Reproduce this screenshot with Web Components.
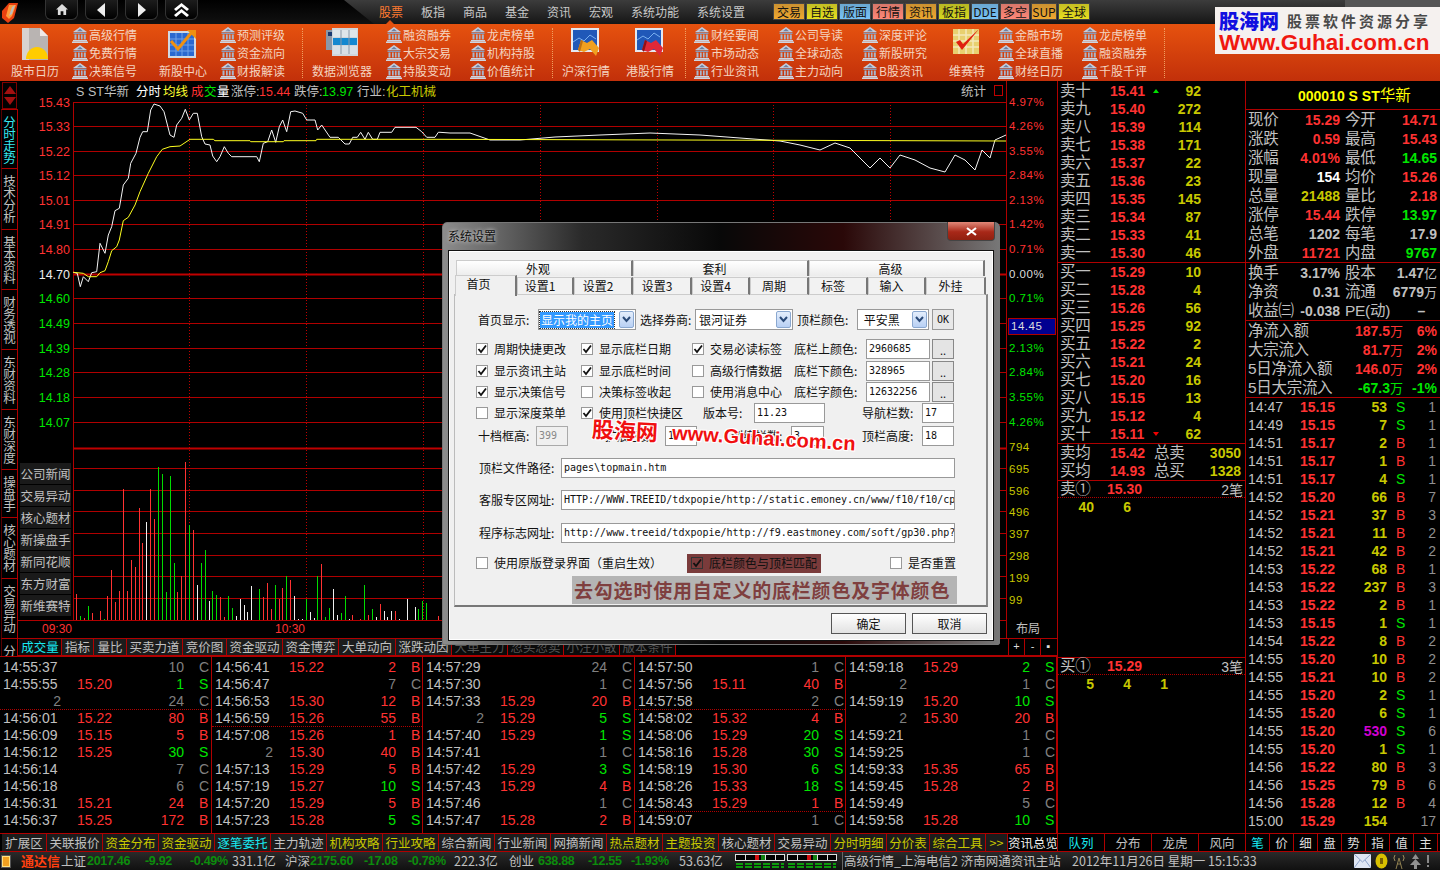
<!DOCTYPE html>
<html lang="zh">
<head>
<meta charset="utf-8">
<title>通达信</title>
<style>
  html, body { margin: 0; background: #000; overflow: hidden; }
  body { font: 14px "Liberation Sans", "Noto Sans CJK SC", sans-serif; color: #c0c0c0; }
</style>
</head>
<body>
<tdx-app>
  <tdx-topbar></tdx-topbar>
  <tdx-ribbon></tdx-ribbon>
  <tdx-sidetabs></tdx-sidetabs>
  <tdx-chart></tdx-chart>
  <tdx-book></tdx-book>
  <tdx-panel></tdx-panel>
  <tdx-ticks></tdx-ticks>
  <tdx-bottomtabs></tdx-bottomtabs>
  <tdx-status></tdx-status>
  <tdx-logo></tdx-logo>
  <tdx-dialog></tdx-dialog>
</tdx-app>

<script>
const RED = '#ff3232', GREEN = '#00e600', YEL = '#c8c800', GRAY = '#c0c0c0', LINE = '#b00000';
const CJK = '"Noto Sans CJK SC", sans-serif';
const SANS = '"Liberation Sans", "Noto Sans CJK SC", sans-serif';

function mount(host, css, html) {
  const root = host.attachShadow({ mode: 'open' });
  root.innerHTML = `<style>${css}</style>${html}`;
  return root;
}

class TdxApp extends HTMLElement {
  constructor() {
    super();
    mount(this, `
      :host { display: grid; position: relative; width: 1440px; height: 870px; overflow: hidden; background: #000;
        grid-template-columns: 18px 1039px 188px 195px; grid-template-rows: 24px 57px 575px 177px 19px 18px; }
      ::slotted(tdx-topbar), ::slotted(tdx-ribbon), ::slotted(tdx-bottomtabs), ::slotted(tdx-status) { grid-column: 1 / -1; }
      ::slotted(tdx-book), ::slotted(tdx-panel) { grid-row: 3 / 5; }
      ::slotted(tdx-ticks) { grid-column: 1 / 3; grid-row: 4; }
    `, `<slot></slot>`);
  }
}

class TdxTopbar extends HTMLElement {
  constructor() {
    super();
    const menu = ['股票', '板指', '商品', '基金', '资讯', '宏观', '系统功能', '系统设置'];
    const quick = [
      ['交易', '#f0a830', 32], ['自选', '#e8e020', 32], ['版面', '#78c4f8', 32], ['行情', '#ff8878', 32],
      ['资讯', '#f0a830', 32], ['板指', '#d8d820', 32], ['DDE', '#78c4f8', 28], ['多空', '#ff8878', 30],
      ['SUP', '#f0a830', 26], ['全球', '#e8e020', 32]
    ];
    mount(this, `
      :host { display: flex; height: 24px; background: linear-gradient(#000, #111); position: relative; overflow: hidden; }
      .logo { width: 20px; height: 22px; margin: 2px 0 0 1px; flex: none; }
      .nav { display: flex; gap: 6px; margin-left: 24px; flex: none; }
      .nav b { width: 33px; height: 20px; margin-right: 1px; box-sizing: border-box; border: 1px solid #333; border-top: 0;
        border-radius: 0 0 6px 6px; background: linear-gradient(#1c1c1c, #000); display: flex; align-items: center; justify-content: center; }
      .nav svg { display: block; }
      .right { position: absolute; left: 344px; right: 0; top: 0; height: 24px; display: flex;
        background: linear-gradient(#3c3c3c, #161616); clip-path: polygon(0 0, 100% 0, 100% 100%, 30px 100%); }
      .menu { display: flex; margin-left: 35px; flex: none; font: 12px/24px ${CJK}; color: #c8c8c8; width: 394px; }
      .menu span { margin-right: 18px; position: relative; white-space: nowrap; }
      .menu .on { color: #ff7a30; }
      .menu .on::after { content: ''; position: absolute; left: 7px; bottom: 0; border: 4px solid transparent; border-top: 0; border-bottom-color: #e05010; }
      .quick { display: flex; gap: 1px; margin-top: 3px; height: 17px; flex: none; }
      .quick span { border: 1px solid #444; box-sizing: border-box; height: 17px; font: 12px/15px ${CJK}; color: #111; text-align: center; }
      .ctl { position: absolute; right: 0; top: 0; width: 95px; height: 7px; background: #555; }
    `, `
      <svg class="logo" viewBox="0 0 20 22"><path d="M8 1h9l-4 15-6 5-6-5V9z" fill="#e84010"/><path d="M8 3h7l-4 11-3 3-3-3z" fill="#ff9a3a"/><path d="M11 5l3-2-3 9-3 2z" fill="#bbb"/></svg>
      <div class="nav">
        <b><svg width="12" height="11" viewBox="0 0 13 12"><path d="M6.5 0L13 6h-2v6H8V8H5v4H2V6H0z" fill="#ddd"/></svg></b>
        <b><svg width="9" height="14" viewBox="0 0 9 14"><path d="M8 0v14L0 7z" fill="#eee"/></svg></b>
        <b><svg width="9" height="14" viewBox="0 0 9 14"><path d="M1 0v14l8-7z" fill="#eee"/></svg></b>
        <b><svg width="15" height="14" viewBox="0 0 15 14"><path d="M7.5 0L15 6l-2 2-5.5-4.5L2 8 0 6zM7.5 6L15 12l-2 2-5.500-4.500L2 14l-2-2z" fill="#fff"/></svg></b>
      </div>
      <div class="right">
        <div class="menu">${menu.map((m, i) => `<span class="${i ? '' : 'on'}">${m}</span>`).join('')}</div>
        <div class="quick">${quick.map(q =>
          `<span style="width:${q[2]}px;background:linear-gradient(${q[1]}cc,${q[1]})">${q[0]}</span>`).join('')}</div>
        <div class="ctl"></div>
      </div>
    `);
  }
}

const BANK = `<svg width="16" height="16" viewBox="0 0 16 16"><path d="M8 0l7 5H1z" fill="#c4cede"/><path d="M8 1.800L5 4.200h6z" fill="#6e80a0"/><path d="M1.500 5.500h13V7h-13z" fill="#8a9ab8"/><path d="M2.500 7.500h2v5h-2zM6 7.500h1.700v5H6zM8.900 7.500h1.700v5H8.900zM11.800 7.500h2v5h-2z" fill="#a8b6cc"/><path d="M1 13h14v1.300H1zM0 14.500h16V16H0z" fill="#cdd5e2"/></svg>`;

const BIG_ICONS = {
  calendar: `<svg width="30" height="32" viewBox="0 0 30 32"><path d="M2 0h18l8 8v24H2z" fill="#b9b4b2"/><path d="M20 0l8 8h-8z" fill="#efeae8"/><path d="M2 0h7v32H2z" fill="#d8d2d0"/><path d="M6 31a10 11 0 0 1 22 0z" fill="#ffcc00"/></svg>`,
  chart: `<svg width="30" height="30" viewBox="0 0 30 30"><rect y="3" width="28" height="27" fill="#cfd8e4"/><rect x="2" y="5" width="24" height="23" fill="#2a68d0"/><path d="M2 11h24M2 17h24M2 23h24M8 5v23M14 5v23M20 5v23" stroke="#6ea0e8" stroke-width="1"/><path d="M3 13l7 8L24 4" fill="none" stroke="#f09010" stroke-width="3"/><path d="M19 2h9v9z" fill="#f09010"/></svg>`,
  table: `<svg width="32" height="28" viewBox="0 0 32 28"><rect x="0" y="2" width="14" height="20" fill="#8a98a8"/><rect x="2" y="4" width="10" height="4" fill="#1a3a70"/><rect x="6" y="0" width="26" height="28" fill="#cfd6dc"/><rect x="7" y="2" width="24" height="7" fill="#dfe6ea"/><rect x="7" y="10" width="24" height="7" fill="#1488d0"/><rect x="7" y="18" width="24" height="8" fill="#d8e0e6"/><path d="M15 2v24M23 2v24" stroke="#8898a8"/></svg>`,
  flagA: `<svg width="30" height="28" viewBox="0 0 30 28"><rect width="28" height="24" fill="#e4e8f0"/><rect x="2" y="2" width="24" height="20" fill="#2058b8"/><path d="M2 14l6-4 5 3 6-6 6 4" fill="none" stroke="#7ab0f0"/><path d="M7 22l3-10 6 3 5-3 7 8-3 8-6-7-6 3z" fill="#f0a020"/><path d="M7 22l3-10 2 1-3 11z" fill="#c07010"/></svg>`,
  flagB: `<svg width="30" height="28" viewBox="0 0 30 28"><rect width="28" height="24" fill="#e4e8f0"/><rect x="2" y="2" width="24" height="20" fill="#2058b8"/><path d="M2 12l6-4 5 3 6-6 6 4" fill="none" stroke="#7ab0f0"/><path d="M7 22l3-10 6 3 5-3 7 8-3 8-6-7-6 3z" fill="#e02838"/><path d="M7 22l3-10 2 1-3 11z" fill="#901018"/></svg>`,
  check: `<svg width="28" height="26" viewBox="0 0 28 26"><rect y="1" width="26" height="25" fill="#e8d070"/><path d="M0 7h26M0 13h26M0 19h26M6 1v25M13 1v25M20 1v25" stroke="#f4e8b8" stroke-width="1.500"/><path d="M3 14l6 8L26 1l-16 15-3-4z" fill="#e02010"/></svg>`
};

class TdxRibbon extends HTMLElement {
  constructor() {
    super();
    const big = (ml, w, icon, label) => `<div class="big" style="margin-left:${ml}px;width:${w}px"><div class="ico">${BIG_ICONS[icon]}</div><div>${label}</div></div>`;
    const col = (ml, w, items) => `<div class="col" style="margin-left:${ml}px;width:${w}px">${items.map(t => `<div class="it">${BANK}<span>${t}</span></div>`).join('')}</div>`;
    const sep = ml => `<i style="margin-left:${ml}px"></i>`;
    mount(this, `
      :host { display: flex; height: 57px; background: linear-gradient(#e6520f, #c2300a); font: 12px/18px ${CJK}; color: #f4d4c0; white-space: nowrap; overflow: hidden; }
      .big { flex: none; text-align: center; padding-top: 4px; box-sizing: border-box; }
      .ico { height: 34px; display: flex; justify-content: center; }
      .ico svg { display: block; }
      .col { flex: none; padding-top: 2px; box-sizing: border-box; }
      .it { display: flex; height: 18px; align-items: center; }
      .it span { margin-left: 1px; }
      i { flex: none; width: 0; border-left: 1px dotted #f0a060; height: 50px; margin-top: 4px; }
    `, [
      big(8, 54, 'calendar', '股市日历'),
      col(10, 84, ['高级行情', '免费行情', '决策信号']),
      big(0, 54, 'chart', '新股中心'),
      col(10, 82, ['预测评级', '资金流向', '财报解读']),
      sep(0),
      big(9, 60, 'table', '数据浏览器'),
      col(14, 84, ['融资融券', '大宗交易', '持股变动']),
      col(0, 82, ['龙虎榜单', '机构持股', '价值统计']),
      sep(0),
      big(7, 52, 'flagA', '沪深行情'),
      big(12, 52, 'flagB', '港股行情'),
      sep(9),
      col(8, 84, ['财经要闻', '市场动态', '行业资讯']),
      col(0, 84, ['公司导读', '全球动态', '主力动向']),
      col(0, 84, ['深度评论', '新股研究', 'B股资讯']),
      big(0, 42, 'check', '维赛特'),
      col(10, 84, ['金融市场', '全球直播', '财经日历']),
      col(0, 82, ['龙虎榜单', '融资融券', '千股千评']),
      sep(0)
    ].join(''));
  }
}

class TdxSidetabs extends HTMLElement {
  constructor() {
    super();
    const tabs = [['分时走势', 59, 1], ['技术分析', 61], ['基本资料', 60], ['财务透视', 60], ['东财资料', 60], ['东财深度', 60], ['操盘手', 48], ['核心题材', 61], ['交易异动', 60], ['分', 19]];
    mount(this, `
      :host { display: flex; flex-direction: column; height: 575px; }
      .scroll { height: 27px; box-sizing: border-box; margin: 1px 1px 0 2px; border: 1px solid #800000; display: flex; flex-direction: column; align-items: center; justify-content: center; gap: 3px; flex: none; }
      .scroll s { border: 6px solid transparent; border-top: 0; border-bottom: 8px solid #a01010; }
      .scroll s + s { border-bottom: 0; border-top: 8px solid #a01010; }
      .tab { flex: none; box-sizing: border-box; margin-left: 1px; border: 1px solid ${LINE}; border-bottom: 0; border-left-color: #500; display: flex; justify-content: center; padding-top: 6px; overflow: hidden; }
      .tab span { writing-mode: vertical-rl; text-orientation: upright; font: 12.500px/15px ${CJK}; color: ${GRAY}; letter-spacing: -0.500px; }
      .tab.on span { color: #38e8f0; }
    `, `<div class="scroll"><s></s><s></s></div>` + tabs.map(t =>
      `<div class="tab ${t[2] ? 'on' : ''}" style="height:${t[1]}px"><span>${t[0]}</span></div>`).join(''));
  }
}

class TdxChart extends HTMLElement {
  constructor() {
    super();
    const left = [[102, '15.43', RED], [126, '15.33', RED], [151, '15.22', RED], [175, '15.12', RED], [200, '15.01', RED], [224, '14.91', RED], [249, '14.80', RED],
      [274, '14.70', '#eee'], [298, '14.60', GREEN], [323, '14.49', GREEN], [348, '14.39', GREEN], [372, '14.28', GREEN], [397, '14.18', GREEN], [422, '14.07', GREEN]];
    const right = [[102, '4.97%', RED], [126, '4.26%', RED], [151, '3.55%', RED], [175, '2.84%', RED], [200, '2.13%', RED], [224, '1.42%', RED], [249, '0.71%', RED],
      [274, '0.00%', '#ddd'], [298, '0.71%', GREEN], [348, '2.13%', GREEN], [372, '2.84%', GREEN], [397, '3.55%', GREEN], [422, '4.26%', GREEN],
      [447, '794', YEL], [469, '695', YEL], [491, '596', YEL], [512, '496', YEL], [534, '397', YEL], [556, '298', YEL], [578, '199', YEL], [600, '99', YEL]];
    const hLines = [102, 126, 151, 175, 200, 224, 249, 298, 323, 348, 372, 397, 422, 468, 490, 511, 533, 555, 576, 598];
    const vLines = [189, 306, 423, 540, 657, 773, 890];

    const zoomed = a => a.map(p => `${(p[0] / 3).toFixed(1)},${(p[1] / 3 + 80).toFixed(1)}`).join(' ');
    const white = zoomed([[220,577],[232,580],[241,620],[250,590],[265,605],[275,578],[290,575],[300,490],[315,520],[325,465],[335,440],[345,392],[358,385],[370,315],[385,295],[392,250],[408,220],[420,172],[428,155],[442,155],[452,90],[462,72],[480,78],[492,95],[510,165],[522,172],[530,135],[545,115],[556,88],[568,120],[580,100],[592,100],[605,170],[615,192],[630,195],[638,228],[650,245],[660,230],[673,200],[685,220],[695,230],[770,230],[778,245],[790,190],[803,185],[815,150],[827,187],[838,140],[848,120],[860,155],[872,95],[885,93],[908,100],[920,120],[945,120],[953,150],[965,135],[990,172],[1015,172],[1035,192],[1048,192],[1058,172],[1072,172],[1082,157],[1095,178],[1105,157],[1118,178],[1132,178],[1140,157],[1175,157],[1185,142],[1248,142],[1265,155],[1280,172],[1305,172],[1315,157],[1320,157]])
      + ' 450,133 470,133 490,140 520,140 555,137 600,135 650,133 700,135 740,138 780,141 800,145 820,150 835,143 850,148 860,158 870,168 880,158 890,168 900,155 915,160 930,168 945,172 955,155 965,160 975,170 982,150 990,158 995,140 1006,135';
    const avg = zoomed([[220,577],[250,580],[265,590],[290,590],[300,578],[315,572],[325,545],[335,512],[350,500],[358,480],[370,422],[385,412],[405,375],[420,335],[445,280],[470,230],[487,208],[510,200],[540,198],[570,178],[640,178],[645,182],[750,182],[752,185],[850,185],[852,182],[948,182],[950,178],[1320,178]])
      + ' 1006,141';

    const R = RED, G = '#00dc00', W = '#eee';
    const bars = [[229,642,R],[241,708,G],[253,714,R],[265,678,G],[277,699,R],[301,693,R],[313,717,G],[322,648,R],[334,570,R],[346,666,R],[358,633,R],[370,327,R],[382,633,R],[394,540,R],[406,561,R],[418,384,R],[427,489,R],[439,426,W],[451,327,R],[463,417,R],[475,261,G],[487,282,G],[499,636,G],[511,288,G],[523,549,G],[532,636,R],[544,588,R],[556,246,R],[568,435,G],[580,450,R],[592,615,W],[604,549,G],[616,510,G],[628,663,W],[637,633,G],[649,645,G],[661,651,R],[673,711,R],[685,648,G],[697,684,G],[709,708,W],[721,657,W],[733,675,W],[742,696,W],[754,618,W],[778,627,G],[790,651,R],[802,609,R],[814,687,R],[826,615,G],[838,657,R],[847,624,R],[859,588,G],[871,600,R],[883,648,W],[895,717,W],[907,717,W],[919,657,G],[931,696,W],[943,714,W],[952,588,G],[964,552,R],[976,711,G],[988,684,G],[1000,627,W],[1012,705,W],[1024,699,G],[1036,648,G],[1048,717,W],[1057,705,R],[1081,717,R],[1093,615,G],[1105,705,R],[1117,687,G],[1129,711,W],[1141,672,R],[1153,693,W],[1162,711,W],[1174,693,W],[1186,693,R],[1198,717,W],[1222,657,W],[1246,681,W],[1255,687,G],[1267,663,G],[1279,669,G],[1315,708,R]];
    const news = ['公司新闻', '交易异动', '核心题材', '新操盘手', '新同花顺', '东方财富', '新维赛特'];
    const tabs = [['成交量', 41, 1], ['指标', 30], ['量比', 31], ['买卖力道', 54], ['竞价图', 42], ['资金驱动', 54], ['资金博弈', 54], ['大单动向', 55], ['涨跌动因', 54], ['大单主力', 54, 2], ['忽买忽卖', 54, 2], ['小注小散', 54, 2], ['版本条件', 54, 2]];
    const infoRow = [[76, 'S', GRAY], [88, 'ST华新', GRAY], [136, '分时', '#fff'], [163, '均线', '#ffff30'], [191, '成', RED], [204, '交', GREEN], [217, '量', '#fff'], [231, '涨停:', GRAY], [259, '15.44', RED], [294, '跌停:', GRAY], [322, '13.97', GREEN], [357, '行业:', GRAY], [386, '化工机械', YEL], [961, '统计', GRAY]];

    mount(this, `
      :host { display: block; position: relative; height: 575px; }
      svg { display: block; }
      svg text { font-family: ${SANS}; }
      .news { position: absolute; left: 2px; top: 382px; display: flex; flex-direction: column; gap: 1px; }
      .news span { width: 51px; height: 21px; background: #1a1a1a; font: 12.500px/21px ${CJK}; color: ${GRAY}; text-align: center; white-space: nowrap; }
      .tabs { display: flex; height: 18px; box-sizing: border-box; padding-left: 1px; border-bottom: 1px solid ${LINE}; border-top: 1px solid ${LINE}; }
      .tabs span { flex: none; box-sizing: border-box; border-right: 1px solid ${LINE}; background: #1c1c1c; font: 12.500px/16px ${CJK}; text-align: center; color: ${GRAY}; white-space: nowrap; }
      .tabs .on { color: #18e8f0; background: #0c0c0c; }
      .tabs .dim { color: #555; background: #0a0a0a; }
      .mini { position: absolute; top: 557px; right: 1px; display: flex; height: 18px; z-index: 1; background: #000; }
      .mini span { width: 16px; border: 1px solid ${LINE}; border-width: 1px 0 1px 1px; font: 11px/14px "Liberation Sans"; text-align: center; color: #ddd; box-sizing: border-box; }
      .cross { position: absolute; left: 990px; top: 237px; width: 48px; height: 17px; box-sizing: border-box; border: 1px solid ${LINE}; background: #000090; color: #ddd; font: 11.500px/15px "Liberation Sans"; padding-left: 2px; letter-spacing: .5px; }
    `, `
      <svg width="1039" height="557" viewBox="18 81 1039 557">
        ${hLines.map(y => `<path d="M73 ${y + .5}H1006" stroke="${LINE}"/>`).join('')}
        <path d="M73 274.500H1006M73 448.500H1006" stroke="#c00000" stroke-width="2"/>
        ${vLines.map(x => `<path d="M${x + .5} 102V620" stroke="#c00000" stroke-dasharray="1 2"/>`).join('')}
        <path d="M73.500 102V620M1006.500 81V638M18 620.500H1006" stroke="${LINE}"/>
        ${bars.map(b => `<path d="M${Math.round(b[0] / 3) + .5} ${(b[1] / 3 + 380).toFixed(1)}V620" stroke="${b[2]}"/>`).join('')}
        <polyline points="${white}" fill="none" stroke="#f4f4f4"/>
        <polyline points="${avg}" fill="none" stroke="#ffff20"/>
        ${left.map(l => `<text x="70" y="${l[0] + 5}" text-anchor="end" font-size="12.500" fill="${l[2]}">${l[1]}</text>`).join('')}
        ${right.map(l => `<text x="1009" y="${l[0] + 4}" font-size="11.500" letter-spacing=".5" fill="${l[2]}">${l[1]}</text>`).join('')}
        ${infoRow.map(t => `<text x="${t[0]}" y="96" font-size="12.500" fill="${t[2]}">${t[1]}</text>`).join('')}
        <rect x="994.500" y="85.500" width="8" height="10" fill="none" stroke="#c00000"/>
        <text x="72" y="633" text-anchor="end" font-size="12" fill="${RED}">09:30</text>
        <text x="305" y="633" text-anchor="end" font-size="12" fill="${RED}">10:30</text>
        <text x="1016" y="633" font-size="12" fill="${GRAY}">布局</text>
      </svg>
      <div class="news">${news.map(n => `<span>${n}</span>`).join('')}</div>
      <div class="cross">14.45</div>
      <div class="tabs">${tabs.map(t => `<span class="${t[2] === 1 ? 'on' : t[2] === 2 ? 'dim' : ''}" style="width:${t[1] + 2}px">${t[0]}</span>`).join('')}</div>
      <div class="mini"><span>+</span><span>-</span><span>▪</span></div>
    `);
  }
}

class TdxBook extends HTMLElement {
  constructor() {
    super();
    const sells = [['卖十', '15.41', 92, 'up'], ['卖九', '15.40', 272], ['卖八', '15.39', 114], ['卖七', '15.38', 171], ['卖六', '15.37', 22], ['卖五', '15.36', 23], ['卖四', '15.35', 145], ['卖三', '15.34', 87], ['卖二', '15.33', 41], ['卖一', '15.30', 46]];
    const buys = [['买一', '15.29', 10], ['买二', '15.28', 4], ['买三', '15.26', 56], ['买四', '15.25', 92], ['买五', '15.22', 2], ['买六', '15.21', 24], ['买七', '15.20', 16], ['买八', '15.15', 13], ['买九', '15.12', 4], ['买十', '15.11', 62, 'down']];
    const row = r => `<div class="row"><span class="l">${r[0]}</span><b class="p">${r[1]}${r[3] ? `<i class="${r[3]}"></i>` : ''}</b><b class="q">${r[2]}</b></div>`;
    const avg = (a, p, b, v) => `<div class="row avg"><span class="l">${a}</span><b class="p">${p}</b><span class="s">${b}</span><b class="q">${v}</b></div>`;
    const queue = (a, p, n, q) => `
      <div class="row qh"><span class="l">${a}</span><b class="p">${p}</b><span class="n">${n}</span></div>
      <div class="row qv">${q.map(v => `<b>${v}</b>`).join('')}</div>`;
    mount(this, `
      :host { display: flex; flex-direction: column; box-sizing: border-box; height: 752px; border-left: 1px solid ${LINE}; white-space: nowrap; }
      .sec { border-bottom: 1px solid ${LINE}; box-sizing: border-box; flex: none; }
      .sec.top { padding-top: 1px; }
      .row { display: flex; height: 18px; align-items: center; padding-left: 2px; }
      .l { width: 50px; font: 15.500px/18px ${SANS}; color: ${GRAY}; flex: none; letter-spacing: -.3px; }
      .p { width: 50px; color: ${RED}; flex: none; position: relative; }
      .q { width: 41px; text-align: right; color: ${YEL}; flex: none; }
      i { position: absolute; left: 43px; top: 6px; border: 3px solid transparent; }
      i.up { border-top: 0; border-bottom: 4px solid #00e000; }
      i.down { border-bottom: 0; border-top: 4px solid #f00000; }
      .s { width: 44px; font: 15.500px/18px ${SANS}; color: ${GRAY}; flex: none; letter-spacing: -.3px; }
      .avg .p { width: 44px; }
      .avg .q { width: 43px; }
      .qh .l { width: 47px; }
      .qh .n { margin-left: auto; margin-right: 2px; color: ${GRAY}; font-size: 14px; }
      .qh { box-sizing: border-box; height: 17px; border-bottom: 1px dotted ${LINE}; }
      .qv { padding-left: 1px; height: 17px; }
      .qv b { color: ${YEL}; width: 37px; text-align: right; flex: none; }
      .qv b:first-child { width: 35px; }
    `, `
      <div class="sec top" style="height:182px">${sells.map(row).join('')}</div>
      <div class="sec" style="height:181px">${buys.map(row).join('')}</div>
      <div class="sec" style="height:37px">${avg('卖均', '15.42', '总卖', 3050)}${avg('买均', '14.93', '总买', 1328)}</div>
      <div class="sec" style="height:177px">${queue('卖①', '15.30', '2笔', [40, 6])}</div>
      <div>${queue('买①', '15.29', '3笔', [5, 4, 1])}</div>
    `);
  }
}

class TdxPanel extends HTMLElement {
  constructor() {
    super();
    const r2 = (a, v, c, b, w, d) => `<div class="row"><span class="l">${a}</span><b class="v" style="color:${c}">${v}</b><span class="l2">${b}</span><b class="v2" style="color:${d}">${w}</b></div>`;
    const flow = (a, v, p, c) => `<div class="row"><span class="l" style="width:100px">${a}</span><b class="f" style="color:${c}">${v}<em>万</em></b><b class="pct" style="color:${c}">${p}</b></div>`;
    const ticks = `14:47,15.15,53,S,1|14:49,15.15,7,S,1|14:51,15.17,2,B,1|14:51,15.17,1,B,1|14:51,15.17,4,S,1|14:52,15.20,66,B,7|14:52,15.21,37,B,3|14:52,15.21,11,B,2|14:52,15.21,42,B,2|14:53,15.22,68,B,1|14:53,15.22,237,B,3|14:53,15.22,2,B,1|14:53,15.15,1,S,1|14:54,15.22,8,B,2|14:55,15.20,10,B,2|14:55,15.21,10,B,2|14:55,15.20,2,S,1|14:55,15.20,6,S,1|14:55,15.20,530,S,6|14:55,15.20,1,S,1|14:56,15.22,80,B,3|14:56,15.25,79,B,6|14:56,15.28,12,B,4|15:00,15.29,154,,17`.split('|').map(s => s.split(','));
    mount(this, `
      :host { display: flex; flex-direction: column; height: 752px; box-sizing: border-box; border-left: 1px solid ${LINE}; white-space: nowrap; }
      .head { height: 29px; box-sizing: border-box; border-bottom: 1px solid ${LINE}; padding: 6px 0 0 52px; font-weight: bold; font-size: 14px; line-height: 18px; color: #ffff00; flex: none; }
      .head span { font-weight: normal; font-size: 15.500px; }
      .sec { border-bottom: 1px solid ${LINE}; flex: none; box-sizing: border-box; }
      .row { display: flex; height: 19px; align-items: center; padding-left: 2px; }
      .l, .l2 { font: 15.500px/19px ${SANS}; color: ${GRAY}; flex: none; letter-spacing: -.3px; }
      .l { width: 45px; }
      .v { width: 47px; text-align: right; flex: none; }
      .l2 { margin-left: 5px; width: 40px; }
      .v2 { width: 52px; text-align: right; flex: none; }
      .f { width: 55px; text-align: right; flex: none; }
      .pct { width: 34px; text-align: right; flex: none; }
      em { font: 13px ${SANS}; }
      .tk { display: grid; grid-template-columns: 52px 50px 37px 20px 29px; height: 18px; line-height: 18px; padding-left: 2px; }
      .ti { color: ${GRAY}; }
      .pr { color: ${RED}; font-weight: bold; }
      .qt { text-align: right; color: ${YEL}; font-weight: bold; }
      .fl { padding-left: 9px; }
      .ct { text-align: right; color: #909090; }
    `, `
      <div class="head">000010 S  ST<span>华新</span></div>
      <div class="sec" style="height:153px">
        ${r2('现价', '15.29', RED, '今开', '14.71', RED)}
        ${r2('涨跌', '0.59', RED, '最高', '15.43', RED)}
        ${r2('涨幅', '4.01%', RED, '最低', '14.65', GREEN)}
        ${r2('现量', '154', '#fff', '均价', '15.26', RED)}
        ${r2('总量', '21488', YEL, '量比', '2.18', RED)}
        ${r2('涨停', '15.44', RED, '跌停', '13.97', GREEN)}
        ${r2('总笔', '1202', GRAY, '每笔', '17.9', GRAY)}
        ${r2('外盘', '11721', RED, '内盘', '9767', GREEN)}
      </div>
      <div class="sec" style="height:58px">
        ${r2('换手', '3.17%', GRAY, '股本', '1.47<em>亿</em>', GRAY)}
        ${r2('净资', '0.31', GRAY, '流通', '6779<em>万</em>', GRAY)}
        ${r2('收益㈢', '-0.038', GRAY, 'PE(动)', '–&nbsp;&nbsp;&nbsp;', GRAY)}
      </div>
      <div class="sec" style="height:77px">
        ${flow('净流入额', '187.5', '6%', RED)}
        ${flow('大宗流入', '81.7', '2%', RED)}
        ${flow('5日净流入额', '146.0', '2%', RED)}
        ${flow('5日大宗流入', '-67.3', '-1%', GREEN)}
      </div>
      <div>${ticks.map(t => `<div class="tk"><span class="ti">${t[0]}</span><span class="pr">${t[1]}</span><span class="qt" style="${t[2] === '530' ? 'color:#d000d0' : ''}">${t[2]}</span><span class="fl" style="color:${t[3] === 'B' ? RED : GREEN}">${t[3]}</span><span class="ct">${t[4]}</span></div>`).join('')}</div>
    `);
  }
}

class TdxTicks extends HTMLElement {
  constructor() {
    super();
    const cols = [
      [212, ['14:55:37,,10,C', '14:55:55,15.20,1,S', '.2,,24,C', '14:56:01,15.22,80,B', '14:56:09,15.15,5,B', '14:56:12,15.25,30,S', '14:56:14,,7,C', '14:56:18,,6,C', '14:56:31,15.21,24,B', '14:56:37,15.25,172,B']],
      [211, ['14:56:41,15.22,2,B', '14:56:47,,7,C', '14:56:53,15.30,12,B', '.14:56:59,15.26,55,B', '14:57:08,15.26,1,B', '2,15.30,40,B', '14:57:13,15.29,5,B', '14:57:19,15.27,10,S', '14:57:20,15.29,5,B', '14:57:23,15.28,5,S']],
      [212, ['14:57:29,,24,C', '14:57:30,,1,C', '14:57:33,15.29,20,B', '2,15.29,5,S', '14:57:40,15.29,1,S', '14:57:41,,1,C', '14:57:42,15.29,3,S', '14:57:43,15.29,4,B', '14:57:46,,1,C', '14:57:47,15.28,2,B']],
      [211, ['14:57:50,,1,C', '14:57:56,15.11,40,B', '.14:57:58,,2,C', '14:58:02,15.32,4,B', '14:58:06,15.29,20,S', '14:58:16,15.28,30,S', '14:58:19,15.30,6,S', '14:58:26,15.33,18,S', '.14:58:43,15.29,1,B', '14:59:07,,1,C']],
      [211, ['14:59:18,15.29,2,S', '2,,1,C', '14:59:19,15.20,10,S', '2,15.30,20,B', '14:59:21,,1,C', '14:59:25,,1,C', '14:59:33,15.35,65,B', '14:59:45,15.28,2,B', '14:59:49,,5,C', '14:59:58,15.28,10,S']]
    ];
    const color = { B: RED, S: GREEN, C: '#808080' };
    const row = s => {
      const dot = s[0] === '.';
      const p = (dot ? s.slice(1) : s).split(',');
      const bare = p[0].length < 3;
      return `<div class="row ${dot ? 'dot' : ''}"><span class="t ${bare ? 'bare' : ''}">${p[0]}</span><span class="p">${p[1]}</span><span class="q" style="color:${color[p[3]]}">${p[2]}</span><span class="f" style="color:${color[p[3]]}">${p[3]}</span></div>`;
    };
    mount(this, `
      :host { display: flex; height: 177px; box-sizing: border-box; border-top: 1px solid ${LINE}; padding-top: 2px; }
      .col { flex: none; box-sizing: border-box; border-right: 1px solid ${LINE}; margin-top: -2px; padding-top: 2px; height: 176px; }
      .row { display: grid; grid-template-columns: 58px 16px 50px 57px 25px; height: 17px; padding-left: 3px; line-height: 17px; box-sizing: border-box; white-space: nowrap; }
      .dot { border-bottom: 1px dotted ${LINE}; }
      .t { color: ${GRAY}; grid-column: 1; }
      .t.bare { text-align: right; color: #808080; }
      .p { color: ${RED}; grid-column: 3; }
      .q { text-align: right; grid-column: 4; }
      .f { grid-column: 5; padding-left: 15px; }
    `, cols.map(c => `<div class="col" style="width:${c[0]}px">${c[1].map(row).join('')}</div>`).join(''));
  }
}

class TdxBottomtabs extends HTMLElement {
  constructor() {
    super();
    const Y = YEL, C = '#18e8f0';
    const tabs = [['扩展区', 45], ['关联报价', 56], ['资金分布', 56, Y], ['资金驱动', 56, Y], ['逐笔委托', 56, C], ['主力轨迹', 56], ['机构攻略', 56, Y], ['行业攻略', 56, Y], ['综合新闻', 56], ['行业新闻', 56], ['网摘新闻', 56], ['热点题材', 56, Y], ['主题投资', 56, Y], ['核心题材', 56], ['交易异动', 56], ['分时明细', 56, Y], ['分价表', 43, Y], ['综合工具', 56, Y], ['>>', 22, Y], ['资讯总览', 50, '#eee', '#000'],
      ['队列', 47, C, '#000'], ['分布', 47, GRAY, '#000'], ['龙虎', 47, GRAY, '#000'], ['风向', 47, GRAY, '#000'], ['笔', 24, C, '#000'], ['价', 24, '#ddd', '#000'], ['细', 24, '#ddd', '#000'], ['盘', 24, '#ddd', '#000'], ['势', 24, '#ddd', '#000'], ['指', 24, '#ddd', '#000'], ['值', 24, '#ddd', '#000'], ['主', 24, '#ddd', '#000']];
    mount(this, `
      :host { display: flex; height: 19px; box-sizing: border-box; border-top: 1px solid ${LINE}; border-bottom: 1px solid ${LINE}; padding-left: 2px; overflow: hidden; }
      span { flex: none; box-sizing: border-box; border-right: 1px solid ${LINE}; background: #1c1c1c; text-align: center; font: 12.500px/17px ${CJK}; white-space: nowrap; overflow: hidden; }
    `, tabs.map(t => `<span style="width:${t[1]}px;color:${t[2] || GRAY};${t[3] ? `background:${t[3]}` : ''}">${t[0]}</span>`).join(''));
  }
}

class TdxStatus extends HTMLElement {
  constructor() {
    super();
    const G = '#0c8c0c';
    const seg = (ml, w, t, c, s) => `<span class="${s ? 'cjk' : ''}" style="margin-left:${ml}px;width:${w}px;color:${c}">${t}</span>`;
    const meter = `<svg width="50" height="16" viewBox="0 0 50 16"><rect x=".5" y="1.500" width="49" height="6" fill="#000" stroke="#ddd"/><path d="M10.500 1V8M20.500 1V8M30.500 1V8M40.500 1V8" stroke="#ddd"/><rect x="20" y="2" width="4" height="5" fill="#d01010"/><rect x="26" y="2" width="4" height="5" fill="#108010"/><path d="M1 11h48M1 14h48" stroke="#0c9c0c" stroke-width="2" stroke-dasharray="7 2"/></svg>`;
    mount(this, `
      :host { display: flex; height: 18px; align-items: center; background: linear-gradient(#2a2a2a, #101010); white-space: nowrap; overflow: hidden; font-size: 12.500px; font-weight: bold; letter-spacing: -.3px; }
      span { flex: none; }
      .logo { width: 8px; height: 11px; margin-left: 2px; box-sizing: border-box; background: #f0a020; border: 1px solid #ffe080; outline: 1px solid #555; flex: none; }
      .brand { margin-left: 11px; font: bold 13px/18px ${CJK}; color: #ff4010; width: 40px; letter-spacing: 0; }
      .cjk { font: 12.500px/18px ${CJK}; color: ${GRAY}; letter-spacing: 0; }
      .meters { display: flex; gap: 2px; margin-left: 10px; flex: none; }
      .meters svg { display: block; }
      .ic { display: flex; gap: 4px; align-items: center; margin-left: 0; flex: none; }
      .sep { width: 1px; height: 18px; background: #666; flex: none; margin-left: 5px; }
      .ic svg { display: block; }
    `, `
      <i class="logo"></i><span class="brand">通达信</span>
      ${seg(0, 26, '上证', GRAY, 1)}${seg(0, 58, '2017.46', G)}${seg(0, 45, '-9.92', G)}${seg(0, 42, '-0.49%', G)}
      ${seg(0, 53, '331.1亿', GRAY, 1)}${seg(0, 25, '沪深', GRAY, 1)}${seg(0, 54, '2175.60', G)}${seg(0, 44, '-17.08', G)}${seg(0, 46, '-0.78%', G)}
      ${seg(0, 55, '222.3亿', GRAY, 1)}${seg(0, 29, '创业', GRAY, 1)}${seg(0, 50, '638.88', G)}${seg(0, 43, '-12.55', G)}${seg(0, 48, '-1.93%', G)}
      ${seg(0, 46, '53.63亿', GRAY, 1)}
      <div class="meters">${meter}${meter}</div>
      <i class="sep"></i>
      ${seg(1, 228, '高级行情_上海电信2  济南网通资讯主站', GRAY, 1)}
      ${seg(0, 282, '2012年11月26日 星期一  15:15:33', GRAY, 1)}
      <div class="ic">
        <svg width="17" height="14" viewBox="0 0 17 14"><rect width="17" height="14" fill="#dfe6f4"/><path d="M0 0l8.500 8L17 0M0 14l6-8M17 14l-6-8" fill="none" stroke="#8aa0c8"/></svg>
        <svg width="13" height="16" viewBox="0 0 13 16"><ellipse cx="6.500" cy="8" rx="6" ry="7.500" fill="#d8c000"/><path d="M5 5h3v6H5z" fill="#786000"/></svg>
        <svg width="14" height="16" viewBox="0 0 14 16"><path d="M7 5L4 16M7 5l3 11M5 11h4" stroke="#908050" fill="none"/><path d="M3 2a5 5 0 0 0 0 6M11 2a5 5 0 0 1 0 6" stroke="#a09060" fill="none"/></svg>
        <svg width="11" height="15" viewBox="0 0 11 15"><path d="M5.500 0L9 5H2zM5.500 5L11 11H0z" fill="#909090"/><rect x="4" y="11" width="3" height="4" fill="#909090"/></svg>
        <svg width="6" height="14" viewBox="0 0 6 14"><path d="M2 1h2v8H2zM2 11h2v2H2z" fill="#888"/></svg>
      </div>
    `);
  }
}

class TdxLogo extends HTMLElement {
  constructor() {
    super();
    mount(this, `
      :host { position: absolute; left: 1215px; top: 7px; width: 225px; height: 47px; box-sizing: border-box; padding: 3px 0 0 4px; background: #f5f1ef; white-space: nowrap; }
      .a { display: flex; align-items: center; height: 22px; }
      .a b { font: 900 20px/22px ${CJK}; color: #1010e0; width: 68px; flex: none; }
      .a span { font: bold 15px/22px ${CJK}; color: #4a4a4a; letter-spacing: 3px; }
      .b { font: bold 22.500px/22px "Liberation Sans", sans-serif; color: #f01810; }
    `, `<div class="a"><b>股海网</b><span>股票软件资源分享</span></div><div class="b">Www.Guhai.com.cn</div>`);
  }
}

class TdxCheck extends HTMLElement {
  constructor() {
    super();
    mount(this, `
      :host { display: flex; align-items: center; flex: none; white-space: nowrap; }
      .box { width: 12px; height: 12px; box-sizing: border-box; background: var(--box, #fff); border: 1px solid var(--box-line, #999); margin-right: 6px; flex: none; display: block; }
      svg { display: block; visibility: hidden; }
      :host([checked]) svg { visibility: visible; }
    `, `<span class="box"><svg width="10" height="10" viewBox="0 0 10 10"><path d="M1.500 5l2.500 3L9 1.500" fill="none" stroke="#111" stroke-width="1.800"/></svg></span><slot></slot>`);
  }
}

class TdxCombo extends HTMLElement {
  constructor() {
    super();
    mount(this, `
      :host { display: flex; align-items: center; flex: none; height: 21px; box-sizing: border-box; border: 1px solid #999; background: #fff; padding: 1px; }
      .t { flex: 1; padding-left: 2px; white-space: nowrap; overflow: hidden; }
      :host([selected]) .t { flex: none; padding: 0 1px; background: #3399ff; color: #fff; outline: 1px dotted #333; line-height: 16px; margin-right: auto; }
      .d { width: 15px; height: 17px; margin-left: auto; box-sizing: border-box; border: 1px solid #8aa8d0; border-radius: 2px; background: linear-gradient(#e4eefc, #b8d0f4); display: flex; align-items: center; justify-content: center; flex: none; }
      svg { display: block; }
    `, `<span class="t"><slot></slot></span><span class="d"><svg width="9" height="7" viewBox="0 0 9 7"><path d="M1 1l3.500 4L8 1" fill="none" stroke="#2a4a78" stroke-width="2"/></svg></span>`);
  }
}

class TdxField extends HTMLElement {
  constructor() {
    super();
    mount(this, `
      :host { display: block; flex: none; height: 20px; box-sizing: border-box; border: 1px solid #999; background: #fff; font: 10px/18px "DejaVu Sans Mono", monospace; color: #111; padding-left: 2px; white-space: nowrap; overflow: hidden; }
      :host([disabled]) { background: #f0f0f0; color: #888; border-color: #aaa; }
    `, `<slot></slot>`);
  }
}

class TdxDialog extends HTMLElement {
  constructor() {
    super();
    const s = (w, m) => `style="width:${w}px;margin-left:${m || 0}px"`;
    const lb = (t, w, m) => `<span class="lb" ${s(w, m)}>${t}</span>`;
    const ck = (t, w, on, m) => `<tdx-check ${on ? 'checked' : ''} ${s(w, m)}>${t}</tdx-check>`;
    const fd = (t, w, m, extra) => `<tdx-field ${extra || ''} ${s(w, m)}>${t}</tdx-field>`;
    const btn = (w, m) => `<span class="dots" ${s(w, m)}>..</span>`;
    const path = (t, v, top) => `<div class="r" style="margin-top:${top}px">${lb(t, 78, 24)}${fd(v, 394, 4)}</div>`;
    mount(this, `
      :host { position: absolute; left: 442px; top: 222px; width: 558px; height: 423px; box-sizing: border-box; border: 1px solid #777; border-radius: 5px 5px 2px 2px;
        background: linear-gradient(90deg, #8c8c8c, #2a2a2a 25%, #080808 50%, #2a0808 72%, #777); font: 12px/20px ${CJK}; color: #111; white-space: nowrap; display: flex; flex-direction: column; z-index: 2; }
      .title { height: 27px; display: flex; flex: none; position: relative; }
      .title span { margin: 3px 0 0 5px; font-size: 12px; color: #111; text-shadow: 0 0 4px #eee; line-height: 20px; }
      .close { position: absolute; right: 4px; top: -1px; width: 48px; height: 19px; background: linear-gradient(#e08878, #a82818 55%, #902010); border: 1px solid #444; border-top: 0; border-radius: 0 0 4px 4px; box-sizing: border-box; display: flex; align-items: center; justify-content: center; }
      .client { margin: 0 5px; background: #f0f0f0; border: 1px solid #111; box-shadow: inset 0 0 0 1px #fff; height: 391px; box-sizing: border-box; flex: none; padding-top: 9px; overflow: hidden; }
      .tabs1, .tabs2 { display: flex; margin-left: 7px; }
      .tabs1 span { height: 16px; box-sizing: border-box; background: linear-gradient(#fff, #ececec); border: 1px solid #ccc; border-right: 2px solid #777; border-bottom: 0; padding-right: 12px; text-align: center; line-height: 15px; flex: none; }
      .tabs2 { height: 19px; margin-left: 6px; }
      .tabs2 span { margin-top: 1px; height: 18px; box-sizing: border-box; border: 1px solid #ccc; border-right: 2px solid #777; padding-right: 10px; text-align: center; line-height: 15px; background: #f2f2f2; flex: none; }
      .tabs2 .sel { margin-top: -1px; height: 21px; border-bottom: 0; background: #f0f0f0; position: relative; z-index: 1; padding-right: 14px; }
      .panel { margin-left: 5px; width: 534px; height: 313px; box-sizing: border-box; border: 1px solid #bbb; border-right: 2px solid #888; border-bottom: 2px solid #777; margin-top: -1px; }
      .r { display: flex; align-items: center; height: 21px; }
      .lb { flex: none; }
      .dots { flex: none; height: 20px; box-sizing: border-box; border: 1px solid #888; background: #e4e4e4; text-align: center; font-size: 11px; line-height: 20px; }
      .ok { flex: none; height: 21px; box-sizing: border-box; border: 1px solid #999; background: #e8e8e8; text-align: center; font: 10px/19px "DejaVu Sans Mono", monospace; }
      .hl { display: flex; align-items: center; flex: none; height: 19px; background: #7a3b3b; padding-left: 4px; box-sizing: border-box; --box: #7a3b3b; --box-line: #333; }
      .hint { margin: 3px 0 0 117px; width: 385px; height: 28px; padding-left: 2px; box-sizing: border-box; background: #b4b4b4; font: bold 19px/28px ${CJK}; color: #7f3f3f; letter-spacing: .8px; overflow: hidden; }
      .act { display: flex; margin: 6px 0 0 382px; gap: 6px; }
      .act span { width: 75px; height: 21px; box-sizing: border-box; border: 1px solid #555; background: linear-gradient(#fff, #e2e2e2); text-align: center; line-height: 19px; flex: none; }
      .wm { position: absolute; color: #f01010; font-weight: bold; text-shadow: 1px 1px 0 #fff, -1px -1px 0 #fff, 1px -1px 0 #fff, -1px 1px 0 #fff; pointer-events: none; z-index: 3; }
      .wm1 { left: 149px; top: 192px; font: bold 22px/28px ${CJK}; transform: rotate(3deg); }
      .wm2 { left: 229px; top: 203px; font: bold 20px/24px "Liberation Sans", sans-serif; transform: rotate(3.500deg); }
    `, `
      <div class="title"><span>系统设置</span><div class="close"><svg width="11" height="9" viewBox="0 0 11 9"><path d="M1 1l9 7M10 1L1 8" stroke="#fff" stroke-width="2.200"/></svg></div></div>
      <div class="client">
        <div class="tabs1"><span style="width:177px">外观</span><span style="width:176px">套利</span><span style="width:176px">高级</span></div>
        <div class="tabs2">
          <span class="sel" style="width:62px">首页</span><span style="width:57px">设置1</span><span style="width:59px">设置2</span><span style="width:59px">设置3</span><span style="width:58px">设置4</span><span style="width:59px">周期</span><span style="width:59px">标签</span><span style="width:58px">输入</span><span style="width:60px">外挂</span>
        </div>
        <div class="panel">
          <div class="r" style="margin-top:14px">
            ${lb('首页显示:', 60, 23)}<tdx-combo selected ${s(98)}>显示我的主页</tdx-combo>
            ${lb('选择券商:', 53, 4)}<tdx-combo ${s(98, 2)}>银河证券</tdx-combo>
            ${lb('顶栏颜色:', 54, 4)}<tdx-combo ${s(72, 6)}>&nbsp;平安黑</tdx-combo><span class="ok" ${s(22, 3)}>OK</span>
          </div>
          <div class="r" style="margin-top:8px">
            <span style="width:21px"></span>${ck('周期快捷更改', 105, 1)}${ck('显示底栏日期', 111, 1)}${ck('交易必读标签', 102, 1)}${lb('底栏上颜色:', 72)}${fd('2960685', 64)}${btn(22, 2)}
          </div>
          <div class="r" style="margin-top:1px">
            <span style="width:21px"></span>${ck('显示资讯主站', 105, 1)}${ck('显示底栏时间', 111, 1)}${ck('高级行情数据', 102, 0)}${lb('底栏下颜色:', 72)}${fd('328965', 64)}${btn(22, 2)}
          </div>
          <div class="r" style="margin-top:0">
            <span style="width:21px"></span>${ck('显示决策信号', 105, 1)}${ck('决策标签收起', 111, 0)}${ck('使用消息中心', 102, 0)}${lb('底栏字颜色:', 72)}${fd('12632256', 64)}${btn(22, 2)}
          </div>
          <div class="r" style="margin-top:0">
            <span style="width:21px"></span>${ck('显示深度菜单', 105, 0)}${ck('使用顶栏快捷区', 122, 1)}${lb('版本号:', 42)}${fd('11.23', 71, 9)}${lb('导航栏数:', 53, 37)}${fd('17', 32, 7)}
          </div>
          <div class="r" style="margin-top:2px">
            ${lb('十档框高:', 52, 23)}${fd('399', 32, 6, 'disabled')}${lb('扩展区数:', 48, 37)}${fd('15', 32, 12)}${lb('训练栏数:', 54, 34)}${fd('3', 33, 6)}${lb('顶栏高度:', 53, 38)}${fd('18', 32, 7)}
          </div>
          ${path('顶栏文件路径:', 'pages\\topmain.htm', 11)}
          ${path('客服专区网址:', 'HTTP://WWW.TREEID/tdxpopie/http://static.emoney.cn/www/f10/f10/cp', 11)}
          ${path('程序标志网址:', 'http://www.treeid/tdxpopie/http://f9.eastmoney.com/soft/gp30.php?', 12)}
          <div class="r" style="margin-top:10px;height:20px">
            <span style="width:21px"></span>${ck('使用原版登录界面（重启生效）', 211, 0)}
            <div class="hl" style="width:134px"><tdx-check checked>底栏颜色与顶栏匹配</tdx-check></div>
            ${ck('是否重置', 65, 0, 69)}
          </div>
          <div class="hint">去勾选时使用自定义的底栏颜色及字体颜色</div>
        </div>
        <div class="act"><span>确定</span><span>取消</span></div>
      </div>
      <div class="wm wm1">股海网</div>
      <div class="wm wm2">www.Guhai.com.cn</div>
    `);
  }
}

customElements.define('tdx-app', TdxApp);
customElements.define('tdx-topbar', TdxTopbar);
customElements.define('tdx-ribbon', TdxRibbon);
customElements.define('tdx-sidetabs', TdxSidetabs);
customElements.define('tdx-chart', TdxChart);
customElements.define('tdx-book', TdxBook);
customElements.define('tdx-panel', TdxPanel);
customElements.define('tdx-ticks', TdxTicks);
customElements.define('tdx-bottomtabs', TdxBottomtabs);
customElements.define('tdx-status', TdxStatus);
customElements.define('tdx-logo', TdxLogo);
customElements.define('tdx-check', TdxCheck);
customElements.define('tdx-combo', TdxCombo);
customElements.define('tdx-field', TdxField);
customElements.define('tdx-dialog', TdxDialog);
</script>
</body>
</html>
